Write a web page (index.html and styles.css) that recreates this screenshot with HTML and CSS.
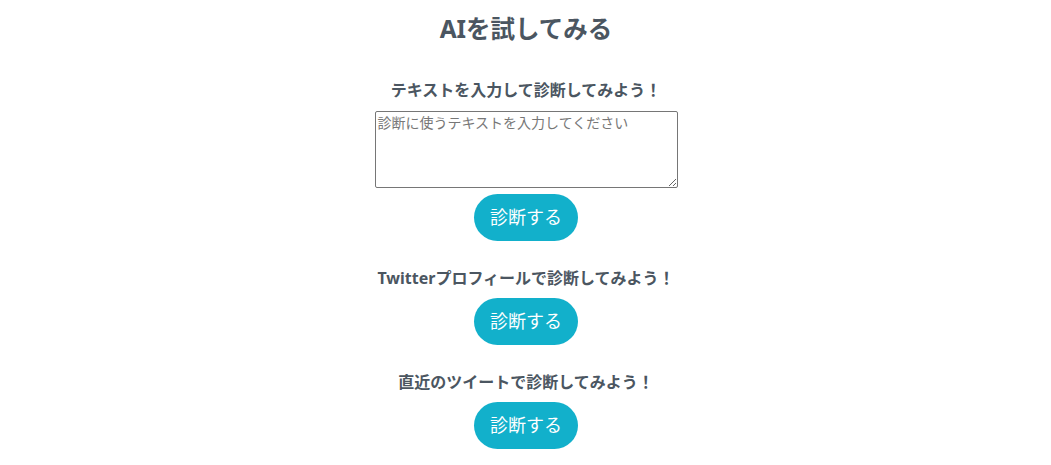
FILE: index.html
```html
<!DOCTYPE html>
<html lang="ja">
<head>
    <meta charset="UTF-8">
    <meta name="viewport" content="width=device-width, initial-scale=1.0">
    <title>AIを試してみる</title>
    <link rel="stylesheet" href="styles.css">
</head>
<body>
    <div class="container">
        <h1>AIを試してみる</h1>

        <div class="section">
            <h2>テキストを入力して診断してみよう！</h2>
            <textarea class="input-text" placeholder="診断に使うテキストを入力してください"></textarea>
            <button class="btn">診断する</button>
        </div>

        <div class="section">
            <h2>Twitterプロフィールで診断してみよう！</h2>
            <button class="btn">診断する</button>
        </div>

        <div class="section">
            <h2>直近のツイートで診断してみよう！</h2>
            <button class="btn">診断する</button>
        </div>
    </div>
</body>
</html>
```

FILE: styles.css
```css
body {
    margin: 0;
    font-family: "Noto Sans", "Noto Sans CJK JP", sans-serif;
    color: #4b5661;
    background: #fff;
}

.container {
    display: flex;
    flex-direction: column;
    align-items: center;
    padding: 11px 0 0 1px;
}

h1 {
    margin: 0 0 31px;
    font-size: 24.5px;
    line-height: 36px;
    font-weight: bold;
}

.section {
    display: flex;
    flex-direction: column;
    align-items: center;
    margin-bottom: 25px;
}

h2 {
    margin: 0 0 8px;
    font-size: 16px;
    line-height: 24px;
    font-weight: bold;
}

.input-text {
    box-sizing: border-box;
    width: 303px;
    height: 77px;
    margin: 1px 0 6px;
    padding: 2px 2px;
    border: 1px solid #767676;
    border-radius: 2px;
    font-family: "Noto Sans", "Noto Sans CJK JP", sans-serif;
    font-size: 14px;
    line-height: 17px;
    color: #333;
}

.input-text::placeholder {
    color: #777;
}

.btn {
    width: 104px;
    height: 47px;
    padding: 0 0 3px;
    border: none;
    border-radius: 24px;
    background-color: #12b0cb;
    color: #fff;
    font-family: "Noto Sans", "Noto Sans CJK JP", sans-serif;
    font-size: 18px;
    cursor: pointer;
}

.btn:hover {
    background-color: #0f9cb4;
}
```
